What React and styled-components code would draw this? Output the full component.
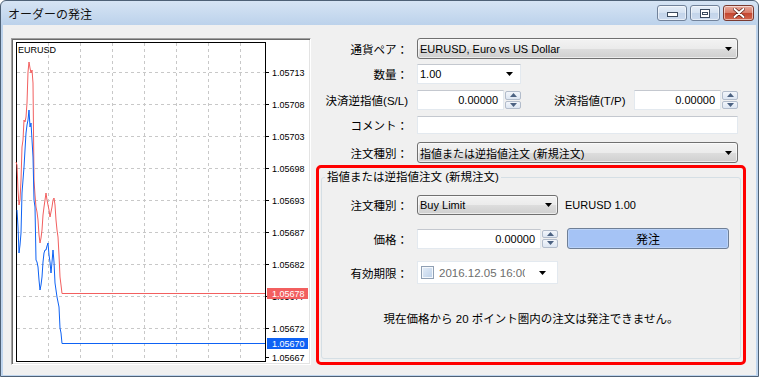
import React from 'react';
import styled, { createGlobalStyle } from 'styled-components';

const GlobalStyle = createGlobalStyle`
  html, body { margin: 0; padding: 0; background: #fff; }
  body {
    font-family: "Liberation Sans", "Noto Sans CJK JP", sans-serif;
    font-size: 11px;
    color: #000;
  }
`;

const Window = styled.div`
  width: 759px;
  height: 377px;
  box-sizing: border-box;
  display: flex;
  flex-direction: column;
  border: 1px solid #4e6176;
  border-radius: 6px 6px 0 0;
  background: linear-gradient(#d6e4f4, #bcd2eb 24px, #bfd5ee);
  padding: 0 2px 1px;
`;

const TitleBar = styled.div`
  height: 24px;
  flex: none;
  display: flex;
  align-items: center;
  padding-left: 5px;
  padding-right: 2px;
`;

const Title = styled.div`
  flex: 1;
  font-family: "Noto Sans CJK JP", sans-serif;
  font-size: 12px;
  color: #111;
`;

const CaptionButton = styled.div`
  width: ${p => p.$w || 30}px;
  height: 16px;
  box-sizing: border-box;
  margin-left: 3px;
  border: 1px solid ${p => (p.$close ? '#7a3a30' : '#71829a')};
  border-radius: 3px;
  display: flex;
  align-items: center;
  justify-content: center;
  background: ${p =>
    p.$close
      ? 'linear-gradient(#e9a99b, #d77a67 50%, #c4452f 51%, #d2674f)'
      : 'linear-gradient(#e6eef8, #d4e1f1 50%, #c3d4ea 51%, #cbdaee)'};
  box-shadow: inset 0 0 0 1px rgba(255, 255, 255, 0.55);
`;

const Body = styled.div`
  flex: 1;
  background: #f0f0f0;
  display: flex;
  align-items: flex-start;
  padding: 13px 10px 0 8px;
`;

const ChartFrame = styled.div`
  width: 300px;
  height: 327px;
  flex: none;
  box-sizing: border-box;
  border: 1px solid;
  border-color: #a0a0a0 #ffffff #ffffff #a0a0a0;
  box-shadow: inset 1px 1px 0 #696969, inset -1px -1px 0 #e3e3e3;
  background: #fff;
  svg { display: block; }
`;

const Form = styled.div`
  width: 430px;
  margin-left: 5px;
  display: flex;
  flex-direction: column;
`;

const Row = styled.div`
  display: flex;
  align-items: center;
  padding-right: ${p => (p.$inner ? 0 : 8)}px;
  margin-bottom: ${p => p.$mb || 0}px;
`;

const Label = styled.div`
  width: ${p => p.$w || 92}px;
  flex: none;
  margin-right: 9px;
  text-align: right;
  white-space: nowrap;
  font-size: 11.5px;
`;

const SideLabel = styled.div`
  margin-left: 33px;
  margin-right: 8px;
  white-space: nowrap;
  font-size: 11.5px;
`;

const Combo = styled.div`
  height: ${p => p.$h || 21}px;
  width: ${p => (p.$w ? `${p.$w}px` : 'auto')};
  flex: ${p => (p.$w ? 'none' : 1)};
  box-sizing: border-box;
  border: 1px solid #707070;
  border-radius: 3px;
  background: linear-gradient(#f3f3f3 0%, #ebebeb 50%, #dddddd 51%, #cfcfcf 100%);
  box-shadow: inset 0 0 0 1px rgba(255, 255, 255, 0.6);
  display: flex;
  align-items: center;
  padding: 0 5px 0 2px;
  font-size: 11px;
`;

const EditCombo = styled.div`
  height: 20px;
  width: ${p => p.$w}px;
  flex: none;
  box-sizing: border-box;
  background: #fff;
  border: 1px solid #e3e9ef;
  border-top-color: #c4c8cf;
  display: flex;
  align-items: center;
  padding: 0 7px 0 2px;
`;

const ComboText = styled.span`
  flex: 1;
  white-space: nowrap;
  overflow: hidden;
`;

const TextBox = styled.div`
  height: ${p => p.$h || 20}px;
  flex: 1;
  box-sizing: border-box;
  background: #fff;
  border: 1px solid #e3e9ef;
  border-top-color: #c4c8cf;
`;

const Spinner = styled.div`
  display: flex;
  height: 20px;
  width: ${p => (p.$w ? `${p.$w}px` : 'auto')};
  flex: ${p => (p.$w ? 'none' : 1)};
`;

const SpinField = styled.div`
  flex: 1;
  box-sizing: border-box;
  background: #fff;
  border: 1px solid #e3e9ef;
  border-top-color: #c4c8cf;
  display: flex;
  align-items: center;
  justify-content: flex-end;
  padding-right: 5px;
`;

const SpinButtons = styled.div`
  width: 17px;
  flex: none;
  display: flex;
  flex-direction: column;
  gap: 1px;
  padding: 1px 0 1px 1px;
  box-sizing: border-box;
`;

const SpinHalf = styled.div`
  flex: 1;
  border: 1px solid #b2bccb;
  border-radius: 2px;
  background: linear-gradient(#f3f6fb, #dde6f2);
  display: flex;
  align-items: center;
  justify-content: center;
`;

const Highlight = styled.div`
  margin-top: 2px;
  height: 200px;
  box-sizing: border-box;
  border: 3px solid #ff0000;
  border-radius: 5px;
  display: flex;
  padding: 3px 2px 3px 2px;
`;

const GroupBox = styled.fieldset`
  flex: 1;
  min-width: 0;
  margin: 0;
  padding: 11px 0 0 0;
  border: 1px solid #d5dfe5;
  border-radius: 3px;
`;

const Legend = styled.legend`
  padding: 0 2px;
  margin-left: 3px;
  font-size: 11.5px;
  line-height: 13px;
`;

const InfoText = styled.div`
  margin-left: 7px;
  white-space: nowrap;
`;

const OrderButton = styled.button`
  margin-left: 9px;
  width: 162px;
  height: 21px;
  box-sizing: border-box;
  border: 1px solid #6f7f96;
  border-radius: 3px;
  background: #a5c3f5;
  box-shadow: inset 0 0 0 1px #b9d2f8;
  font-family: "Noto Sans CJK JP", sans-serif;
  font-size: 12px;
  color: #000;
  padding: 0;
`;

const DateBox = styled.div`
  width: 141px;
  height: 23px;
  flex: none;
  box-sizing: border-box;
  background: #fff;
  border: 1px solid #e3e9ef;
  display: flex;
  align-items: center;
  padding: 0 11px 0 3px;
`;

const CheckBox = styled.div`
  width: 13px;
  height: 13px;
  flex: none;
  box-sizing: border-box;
  border: 1px solid #8f9fb3;
  background: linear-gradient(135deg, #e4edf8, #bcd0e8);
  box-shadow: inset 0 0 0 1px #f4f8fc;
`;

const DateText = styled.span`
  width: 86px;
  margin-left: 5px;
  overflow: hidden;
  white-space: nowrap;
  color: #6d6d6d;
  font-size: 11.5px;
  margin-right: auto;
`;

const Message = styled.div`
  margin-top: 26px;
  text-align: center;
  font-size: 11.5px;
`;

const Arrow = () => (
  <svg width="7" height="4" viewBox="0 0 7 4" style={{ flex: 'none' }}>
    <polygon points="0,0 7,0 3.5,4" fill="#000" />
  </svg>
);

const SpinArrow = ({ up }) => (
  <svg width="7" height="4" viewBox="0 0 7 4">
    <polygon points={up ? '0,4 7,4 3.5,0' : '0,0 7,0 3.5,4'} fill="#4c6282" />
  </svg>
);

const Spin = ({ value, w }) => (
  <Spinner $w={w}>
    <SpinField>{value}</SpinField>
    <SpinButtons>
      <SpinHalf><SpinArrow up /></SpinHalf>
      <SpinHalf><SpinArrow /></SpinHalf>
    </SpinButtons>
  </Spinner>
);

const red = '#f25f5f';
const blue = '#0e62f4';

const redLine = [
  [16, 162], [17, 165], [18, 190], [19, 205], [20, 200], [21, 180], [22, 147], [23, 140],
  [24, 120], [25, 122], [26, 117], [27, 103], [28, 72], [29, 62], [30, 68], [31, 73],
  [32, 70], [33, 83], [34, 180], [35, 195], [36, 207], [37, 212], [38, 220], [39, 235],
  [40, 243], [41, 238], [42, 230], [43, 215], [44, 207], [45, 200], [46, 193], [47, 200],
  [48, 205], [49, 210], [50, 217], [51, 212], [52, 207], [53, 200], [54, 198], [55, 205],
  [56, 220], [57, 230], [58, 237], [59, 255], [60, 277], [61, 285], [62, 293.5], [265, 293.5],
];

const blueLine = [
  [17, 210], [18, 227], [19, 253], [20, 245], [21, 233], [22, 193], [23, 180], [24, 167],
  [25, 150], [26, 133], [27, 125], [28, 120], [29, 110], [30, 127], [31, 123], [32, 140],
  [33, 157], [34, 200], [35, 207], [36, 260], [37, 262], [38, 267], [39, 280], [40, 290],
  [41, 285], [42, 277], [43, 262], [44, 253], [45, 250], [46, 250], [47, 246], [48, 243],
  [49, 255], [50, 262], [51, 273], [52, 262], [53, 250], [54, 262], [55, 283], [56, 290],
  [57, 297], [58, 302], [59, 307], [60, 328], [61, 333], [62, 343.5], [265, 343.5],
];

const levels = [
  ['1.05713', 72], ['1.05708', 104], ['1.05703', 136], ['1.05698', 168], ['1.05693', 200],
  ['1.05687', 232], ['1.05682', 264], ['1.05677', 296], ['1.05672', 328],
];
const gridX = [48, 80, 112, 144, 176, 208, 240];

const pts = arr => arr.map(p => p.join(',')).join(' ');

const Chart = () => (
  <svg width="298" height="325" viewBox="12 39 298 325" fontFamily="Liberation Sans, sans-serif" fontSize="9">
    {gridX.map(x => (
      <line key={x} x1={x + 0.5} y1="43" x2={x + 0.5} y2="361" stroke="#c8c8c8" strokeDasharray="3 3" />
    ))}
    {levels.map(([, y]) => (
      <line key={y} x1="17" y1={y + 0.5} x2="265" y2={y + 0.5} stroke="#c8c8c8" strokeDasharray="3 3" />
    ))}
    <rect x="16.5" y="42.5" width="249" height="319" fill="none" stroke="#000" />
    {levels.map(([t, y]) => (
      <g key={t}>
        <line x1="265" y1={y + 0.5} x2="269" y2={y + 0.5} stroke="#000" />
        <text x="272" y={y + 3.5} fill="#000">{t}</text>
      </g>
    ))}
    <line x1="265" y1="357.5" x2="269" y2="357.5" stroke="#000" />
    <text x="272" y="360.5" fill="#000">1.05667</text>
    <polyline points={pts(redLine)} fill="none" stroke={red} />
    <polyline points={pts(blueLine)} fill="none" stroke={blue} />
    <rect x="267" y="288" width="41" height="11" fill={red} />
    <text x="272" y="297" fill="#fff">1.05678</text>
    <rect x="267" y="338" width="41" height="11" fill={blue} />
    <text x="272" y="347" fill="#fff">1.05670</text>
    <text x="18" y="53" fill="#000">EURUSD</text>
  </svg>
);

export default function App() {
  return (
    <>
      <GlobalStyle />
      <Window>
        <TitleBar>
          <Title>オーダーの発注</Title>
          <CaptionButton>
            <svg width="11" height="8" viewBox="0 0 11 8">
              <rect x="0.5" y="3.5" width="10" height="4" fill="#fff" stroke="#3b4a5e" />
            </svg>
          </CaptionButton>
          <CaptionButton>
            <svg width="10" height="9" viewBox="0 0 10 9">
              <rect x="0.5" y="0.5" width="9" height="8" fill="#fff" stroke="#3b4a5e" />
              <rect x="2.5" y="3.5" width="5" height="2" fill="none" stroke="#3b4a5e" />
            </svg>
          </CaptionButton>
          <CaptionButton $close $w={31}>
            <svg width="12" height="10" viewBox="0 0 12 10">
              <path d="M1.5 1 L10.5 9 M10.5 1 L1.5 9" stroke="#5a1f16" strokeWidth="3.4" strokeLinecap="round" />
              <path d="M1.5 1 L10.5 9 M10.5 1 L1.5 9" stroke="#fff" strokeWidth="2" strokeLinecap="round" />
            </svg>
          </CaptionButton>
        </TitleBar>
        <Body>
          <ChartFrame>
            <Chart />
          </ChartFrame>
          <Form>
            <Row $mb={5}>
              <Label>通貨ペア：</Label>
              <Combo>
                <ComboText>EURUSD, Euro vs US Dollar</ComboText>
                <Arrow />
              </Combo>
            </Row>
            <Row $mb={6}>
              <Label>数量：</Label>
              <EditCombo $w={104}>
                <ComboText>1.00</ComboText>
                <Arrow />
              </EditCombo>
            </Row>
            <Row $mb={6}>
              <Label>決済逆指値(S/L)</Label>
              <Spin value="0.00000" w={104} />
              <SideLabel>決済指値(T/P)</SideLabel>
              <Spin value="0.00000" />
            </Row>
            <Row $mb={8}>
              <Label>コメント：</Label>
              <TextBox $h={18} />
            </Row>
            <Row>
              <Label>注文種別：</Label>
              <Combo>
                <ComboText>指値または逆指値注文 (新規注文)</ComboText>
                <Arrow />
              </Combo>
            </Row>
            <Highlight>
              <GroupBox>
                <Legend>指値または逆指値注文 (新規注文)</Legend>
                <Row $inner $mb={13}>
                  <Label $w={86}>注文種別：</Label>
                  <Combo $w={141} $h={20}>
                    <ComboText>Buy Limit</ComboText>
                    <Arrow />
                  </Combo>
                  <InfoText>EURUSD 1.00</InfoText>
                </Row>
                <Row $inner $mb={12}>
                  <Label $w={86}>価格：</Label>
                  <Spin value="0.00000" w={141} />
                  <OrderButton>発注</OrderButton>
                </Row>
                <Row $inner>
                  <Label $w={86}>有効期限：</Label>
                  <DateBox>
                    <CheckBox />
                    <DateText>2016.12.05 16:00</DateText>
                    <Arrow />
                  </DateBox>
                </Row>
                <Message>現在価格から 20 ポイント圏内の注文は発注できません。</Message>
              </GroupBox>
            </Highlight>
          </Form>
        </Body>
      </Window>
    </>
  );
}
